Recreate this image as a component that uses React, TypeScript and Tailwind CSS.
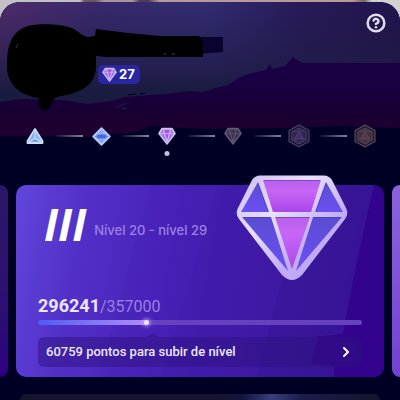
import { ChevronRight, CircleHelp } from "lucide-react";

const points = 296241;
const goal = 357000;
// the bar shows progress inside the current level, not the lifetime total
const levelProgress = 33.5;

function Backdrop() {
  return (
    <svg
      className="absolute inset-x-0 top-0 h-[134px] w-full"
      viewBox="0 0 400 134"
      preserveAspectRatio="none"
      aria-hidden="true"
    >
      <defs>
        <linearGradient id="sky" x1="0" y1="0" x2="1" y2="0">
          <stop offset="0" stopColor="#4f2c6c" />
          <stop offset="0.25" stopColor="#38296c" />
          <stop offset="0.52" stopColor="#322c72" />
          <stop offset="0.75" stopColor="#281a58" />
          <stop offset="1" stopColor="#22134c" />
        </linearGradient>
        <linearGradient id="skyFade" x1="0" y1="0" x2="0" y2="1">
          <stop offset="0" stopColor="#1c1b45" stopOpacity="0" />
          <stop offset="0.45" stopColor="#1e1b46" stopOpacity="0.6" />
          <stop offset="0.75" stopColor="#1a1b40" />
        </linearGradient>
        <linearGradient id="hill" x1="0" y1="0" x2="0" y2="1">
          <stop offset="0.3" stopColor="#190043" />
          <stop offset="0.7" stopColor="#180032" />
          <stop offset="1" stopColor="#1f002f" />
        </linearGradient>
      </defs>
      <rect width="400" height="120" fill="url(#sky)" />
      <rect width="400" height="120" fill="url(#skyFade)" />
      <rect y="115" width="400" height="19" fill="#000024" />
      <path
        d="M0 100 L22 97 L64 98 L88 102 L112 99 L124 95 L150 93 L166 92 L190 89 L202 90 L216 86 L228 83 L240 75 L252 71 L266 68 L270 62 L272 67 L285 64 L293 55 L300 60 L304 61 H400 V126 L340 124 L280 126 L205 127 L150 124 L132 131 L90 134 H0 Z"
        fill="url(#hill)"
      />
      <path d="M128 93 L136 92 M140 92 L145 91" stroke="#050014" strokeWidth="1" />
      <path d="M116 106 L126 101 M122 107 L127 106" stroke="#3a3450" strokeWidth="0.6" />
    </svg>
  );
}

function Scribble() {
  return (
    <svg className="absolute left-0 top-0 h-[112px] w-[228px]" viewBox="0 0 228 112" aria-hidden="true">
      <path d="M198 35 L223 35 L223 50 L198 52 Z" fill="#08042e" />
      <path
        d="M7 60 C7 40 14 28 28 24 C40 21 62 22 72 26 C78 29 82 34 88 35 L95 34 L96 27 L128 31 L160 34 L199 34 L203 40 L203 55 L108 55 L96 54 L96 65 C96 78 88 86 74 91 C66 94 58 93 54 97 C51 104 48 110 43 108 C38 106 38 102 39 96 C22 94 9 84 7 68 Z"
        fill="#000"
      />
      <path d="M16 46 L18 42" stroke="#444" strokeWidth="0.8" />
      <path d="M164 52 H166 M172 52 H175" stroke="#555" strokeWidth="0.8" />
    </svg>
  );
}

function SmallDiamond({ className, dim = false }: { className?: string; dim?: boolean }) {
  return (
    <svg
      viewBox="0 0 18 18"
      className={className}
      fill={dim ? "#38324f" : "#9d7ce8"}
      stroke={dim ? "#5e5873" : "#cfc0f2"}
      strokeLinejoin="round"
      aria-hidden="true"
    >
      <path d="M4 1.5 H14 L17 6.5 L9 17 L1 6.5 Z" strokeWidth="1.5" />
      <path d="M5.5 2.5 H12.5 L9 15 Z" fill={dim ? "#3f3149" : "#b44fe2"} strokeWidth="0.7" />
      <path d="M1.5 6.5 H16.5 M5 2 L9 15 L13 2" fill="none" strokeWidth="0.7" />
    </svg>
  );
}

function Triangle() {
  return (
    <svg viewBox="0 0 18 18" className="size-[18px]" strokeLinejoin="round" aria-hidden="true">
      <path d="M9 2 L16.5 14 V16 H1.5 V14 Z" fill="#8db4ee" stroke="#c9dbf6" strokeWidth="1.8" />
      <path d="M9 2.5 V11 L2 15.5 M9 11 L16 15.5" fill="none" stroke="#c9dcf8" strokeWidth="1.2" />
      <path d="M8 5 V10.5 L4 13 Z" fill="#86aee6" />
      <path d="M5.5 14.5 L9 12.5 L12.5 14.5 Z" fill="#7196da" />
    </svg>
  );
}

function Rhombus() {
  return (
    <svg viewBox="0 0 18 18" className="size-[19px]" strokeLinejoin="round" aria-hidden="true">
      <path d="M9 1.2 L16.8 9 L9 16.8 L1.2 9 Z" fill="#5d83ea" stroke="#b4c5f2" strokeWidth="1.8" />
      <path d="M9 2 L12.5 6.5 H5.5 Z M9 16 L12.5 11.5 H5.5 Z" fill="#7ea3f2" stroke="#b4c5f2" strokeWidth="0.8" />
      <path d="M5.5 6.5 L2 9 L5.5 11.5 M12.5 6.5 L16 9 L12.5 11.5" fill="none" stroke="#b4c5f2" strokeWidth="0.8" />
      <ellipse cx="9" cy="9" rx="4" ry="1.8" fill="#4168d8" />
    </svg>
  );
}

function Hexagon({ warm = false }: { warm?: boolean }) {
  const line = warm ? "#584958" : "#4c4068";
  return (
    <svg viewBox="0 0 22 24" className="h-6 w-[22px]" strokeLinejoin="round" fill="none" stroke={line} aria-hidden="true">
      <path d="M11 1 L21 6.5 V17.5 L11 23 L1 17.5 V6.5 Z" fill={warm ? "#261c34" : "#1e173a"} strokeWidth="1.2" />
      <path d="M11 4 L18.2 8 V16 L11 20 L3.8 16 V8 Z" fill={warm ? "#40303f" : "#2f2450"} strokeWidth="0.9" />
      <path d="M11 7 L15.5 15 H6.5 Z" strokeWidth="1" fill={warm ? "#573a42" : "#442c70"} />
      <path d="M11 4 V7 M15.5 15 L18.2 16 M6.5 15 L3.8 16 M11 7 L18.2 8 M11 7 L3.8 8 M11 20 L15.5 15 M11 20 L6.5 15" strokeWidth="0.7" />
    </svg>
  );
}

const tiers = [
  { name: "I", icon: <Triangle /> },
  { name: "II", icon: <Rhombus /> },
  { name: "III", icon: <SmallDiamond className="size-[18px]" />, current: true },
  { name: "IV", icon: <SmallDiamond className="size-[18px]" dim /> },
  { name: "V", icon: <Hexagon /> },
  { name: "VI", icon: <Hexagon warm /> },
];

function BigDiamond() {
  return (
    <svg
      viewBox="0 0 112 106"
      className="absolute -top-[10px] right-[36px] h-[106px] w-[112px]"
      strokeLinejoin="round"
      aria-hidden="true"
    >
      <defs>
        <linearGradient id="frame" x1="0" y1="0" x2="1" y2="1">
          <stop offset="0" stopColor="#c9bdf0" />
          <stop offset="0.35" stopColor="#e8e0fc" />
          <stop offset="0.65" stopColor="#c3aef5" />
          <stop offset="1" stopColor="#b79df5" />
        </linearGradient>
        <linearGradient id="pink" x1="0" y1="0" x2="0" y2="1">
          <stop offset="0" stopColor="#b95fee" />
          <stop offset="0.35" stopColor="#c766f4" />
          <stop offset="1" stopColor="#a845ec" />
        </linearGradient>
        <linearGradient id="blue" x1="0" y1="0" x2="0" y2="1">
          <stop offset="0" stopColor="#5b4cd3" />
          <stop offset="1" stopColor="#6a50f2" />
        </linearGradient>
      </defs>
      <path
        d="M24 0.5 H88 Q93 0.5 96 5 L110 33 Q113 39 109 44 L66 100 Q56 110 46 100 L3 44 Q-1 39 2 33 L16 5 Q19 0.5 24 0.5 Z"
        fill="url(#frame)"
      />
      <path d="M22 7 L33 37 H5 Z M90 7 L107 37 H79 Z" fill="url(#blue)" />
      <path d="M6 42 H35 L52 96 Z M106 42 H77 L60 96 Z" fill="url(#blue)" />
      <path d="M27 5 H85 L75 37 H37 Z" fill="url(#pink)" />
      <path d="M39 42 H74 L56 94 Z" fill="url(#pink)" />
      <path d="M28 5.5 H84 M22 8 L32 36 M90 8 L80 36 M8 42.5 H35 M40 42.5 H73 M77 42.5 H104" stroke="#4936a8" strokeWidth="1" opacity="0.55" />
    </svg>
  );
}

function CardShade() {
  return (
    <svg
      className="absolute inset-0 size-full"
      viewBox="0 0 368 193"
      preserveAspectRatio="none"
      aria-hidden="true"
    >
      <path d="M135 0 L83 193 H368 V0 Z" fill="#34129a" opacity="0.06" />
      <path d="M202 0 L146 193 H368 V0 Z" fill="#34129a" opacity="0.12" />
      <path d="M292 0 L240 193 H368 V0 Z" fill="#2f1488" opacity="0.2" />
      <path d="M358 0 L340 80 L327 150 L302 152 L295 180 L318 182 V193 H368 V0 Z" fill="#33008c" opacity="0.8" />
    </svg>
  );
}

export default function App() {
  return (
    <div className="min-h-screen w-full bg-[linear-gradient(to_right,#c3c1c4_0_20%,#6b5860_21%_24%,#a6979a_26%_33%,#4b3d53_35%_37%,#b89a98_40%_88%,#716264_91%,#d3d0d0_93%)] pt-0.5 font-[Inter,'Liberation_Sans',sans-serif]">
      <div className="relative flex min-h-[calc(100vh-2px)] flex-col overflow-hidden rounded-t-[20px] bg-[#000024]">
        <Backdrop />

        <header className="relative flex h-[122px] items-start justify-between pl-[98px] pr-3.5 pt-[11px]">
          <Scribble />
          <div className="relative mt-[52px] flex h-[19px] w-[42px] items-center gap-0.5 rounded-[5px] bg-[#2a26a0] pl-1">
            <SmallDiamond className="size-[15px]" />
            <span className="text-[13px] font-bold leading-[19px] text-white">27</span>
          </div>
          <button aria-label="Ajuda" className="text-[#e0dcee]">
            <CircleHelp className="size-5" strokeWidth={3} />
          </button>
        </header>

        <ol className="relative flex h-6 items-center px-6">
          {tiers.map((tier, i) => (
            <li key={tier.name} className={i ? "flex flex-1 items-center" : "flex items-center"} aria-label={tier.name}>
              {i > 0 && (
                <span className="ml-2.5 mr-[7px] h-0.5 flex-1 bg-gradient-to-r from-[#8583a0]/10 to-[#8583a0]" />
              )}
              <span className="relative flex w-[22px] justify-center">
                {tier.icon}
                {tier.current && (
                  <span className="absolute left-1/2 top-full mt-1.5 size-[5px] -translate-x-1/2 rounded-full bg-[#c4c2dc]" />
                )}
              </span>
            </li>
          ))}
        </ol>

        <main className="relative mt-[37px] flex gap-2">
          <div className="w-2 rounded-r-[10px] bg-gradient-to-b from-[#2b1767] via-[#2c126f] to-[#2d0080]" />

          <section className="relative min-w-0 flex-1 rounded-[10px] bg-[linear-gradient(100deg,#6246dc_0%,#5230c8_18%,#4821b8_42%,#421ba6_68%,#3a1292_100%)] px-[22px] pb-2.5">
            <div className="absolute inset-0 overflow-hidden rounded-[10px]">
              <CardShade />
            </div>
            <BigDiamond />

            <div className="relative flex items-end gap-2 pl-1.5 pt-[15px]">
              <h1 className="font-['Open_Sans',sans-serif] text-[44px] font-bold italic leading-[48px] text-white">III</h1>
              <p className="pb-2 text-[13px] font-medium leading-5 text-[#9c80e2]">Nível 20 - nível 29</p>
            </div>

            <p className="relative mt-[46px] font-[Roboto,sans-serif] leading-6">
              <span className="text-lg font-bold leading-6 text-[#ece6fc]">{points}</span>
              <span className="text-base leading-6 text-[#9a80e0]">/{goal}</span>
            </p>

            <div
              role="progressbar"
              aria-valuenow={levelProgress}
              aria-label="Progresso do nível"
              className="relative mt-px h-[5px] rounded-full bg-[#6641bd]"
            >
              <div
                className="relative h-full rounded-full bg-gradient-to-r from-[#4d5cf0] to-[#b28cf5]"
                style={{ width: `${levelProgress}%` }}
              >
                <span className="absolute -right-0.5 top-0 size-[5px] rounded-full bg-[#f0e4ff] shadow-[0_0_4px_1px_#c9a5ff]" />
              </div>
            </div>

            <button className="relative mt-3 flex h-[30px] w-full items-center justify-between rounded-[6px] bg-[#2d1280]/50 pl-2 pr-2">
              <span className="absolute -top-1 left-[108px] h-1 w-3 bg-[#2d1280]/50 [clip-path:polygon(50%_0,100%_100%,0_100%)]" />
              <span className="whitespace-nowrap font-[Roboto,sans-serif] text-[13px] font-medium text-[#ece6fa]">
                {goal - points} pontos para subir de nível
              </span>
              <ChevronRight className="size-4 text-white" strokeWidth={3} />
            </button>
          </section>

          <div className="w-2 rounded-l-[10px] bg-gradient-to-b from-[#8a63dc] to-[#7440d2]" />
        </main>

        <div className="relative mx-5 mt-[17px] flex-1 rounded-t-[10px] bg-[linear-gradient(to_right,#14132e_0_55%,#14163f_62%,#3a3d7c_70%,#1b1d4a_78%,#14132e)]" />
      </div>
    </div>
  );
}
